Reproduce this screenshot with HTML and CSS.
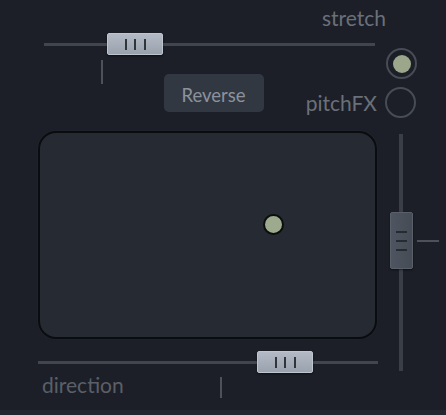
FILE: index.html
```html
<!DOCTYPE html>
<html lang="en">
<head>
  <meta charset="UTF-8" />
  <title>Stretch pad</title>
  <link rel="stylesheet" href="styles.css">
</head>
<body>
  <div class="panel">
    <div class="main">
      <div class="hslider stretch-slider">
        <div class="thumb" style="margin-left: 63px"><i></i><i></i><i></i></div>
      </div>

      <div class="mid-row">
        <span class="tick"></span>
        <button class="btn">Reverse</button>
      </div>

      <div class="pad">
        <span class="dot" style="left: 223px; top: 81px"></span>
      </div>

      <div class="hslider dir-slider">
        <div class="thumb" style="margin-left: 219px"><i></i><i></i><i></i></div>
      </div>

      <div class="dir-row">
        <span class="label">direction</span>
        <span class="tick"></span>
      </div>
    </div>

    <div class="side">
      <div class="label stretch-label">stretch</div>
      <span class="radio on"></span>
      <div class="radio-row">
        <span class="label">pitchFX</span>
        <span class="radio"></span>
      </div>

      <div class="vslider">
        <div class="vtrack">
          <div class="vthumb" style="margin-top: 78px"><i></i><i></i><i></i></div>
        </div>
        <span class="htick"></span>
      </div>
    </div>
  </div>
  <div class="footer"></div>
</body>
</html>
```

FILE: styles.css
```css
body {
  margin: 0;
  width: 446px;
  height: 415px;
  overflow: hidden;
  background-color: #1c1f27;
  font-family: Lato, "Open Sans", sans-serif;
  color: #6a707a;
}

.panel {
  display: grid;
  grid-template-columns: 380px 66px;
  height: 410px;
}

.footer {
  height: 5px;
  background-color: #24272f;
}

.main {
  display: flex;
  flex-direction: column;
  padding-left: 38px;
}

.label {
  font-size: 21px;
  line-height: 24px;
  white-space: nowrap;
}

/* horizontal sliders */
.hslider {
  height: 22px;
  display: flex;
  background: linear-gradient(to bottom, transparent 10px, #41454d 10px, #41454d 13px, transparent 13px);
}

.stretch-slider {
  margin: 33px 0 0 6px;
  width: 331px;
}

.dir-slider {
  margin-top: 12px;
  width: 340px;
}

.thumb {
  width: 54px;
  height: 20px;
  border: 1px solid #bfc5cf;
  border-radius: 2px;
  background: linear-gradient(to bottom, #b3bac6, #9aa2ae);
  display: flex;
  justify-content: center;
  align-items: center;
  gap: 7.5px;
  box-shadow: 0 1px 2px rgba(0, 0, 0, 0.5);
}

.thumb i {
  width: 2px;
  height: 11px;
  background-color: #30343b;
}

.tick {
  width: 1.5px;
  background-color: #4c515a;
}

.mid-row {
  display: flex;
  align-items: flex-start;
  margin-top: 5px;
}

.mid-row .tick {
  height: 24px;
  margin-left: 63px;
}

.btn {
  margin: 14px 0 0 61px;
  width: 100px;
  height: 38px;
  border: none;
  border-radius: 5px;
  background-color: #323842;
  color: #8b929c;
  font-family: Lato, "Open Sans", sans-serif;
  font-size: 18.5px;
  padding: 3px 0 0;
}

.pad {
  position: relative;
  margin-top: 19px;
  width: 339px;
  height: 208px;
  box-sizing: border-box;
  border: 2px solid #0a0c10;
  border-radius: 18px;
  background-color: #262a32;
  box-shadow: 0 0 2px rgba(120, 130, 145, 0.15);
}

.dot {
  position: absolute;
  width: 17px;
  height: 17px;
  border: 2px solid #0c0e0d;
  border-radius: 50%;
  background-color: #9daa8d;
}

.dir-row {
  display: grid;
  grid-template-columns: 182px auto;
  align-items: start;
}

.dir-row .label {
  margin: 0 0 0 4px;
  color: #5a5f68;
}

.dir-row .tick {
  height: 21px;
  margin-top: 4px;
}

/* right column */
.side {
  display: flex;
  flex-direction: column;
  align-items: flex-end;
}

.stretch-label {
  margin: 6px 60px 0 0;
}

.radio {
  width: 27px;
  height: 27px;
  border: 2px solid #474c55;
  border-radius: 50%;
  display: flex;
  justify-content: center;
  align-items: center;
}

.side > .radio {
  margin: 18px 29px 0 0;
}

.radio.on::after {
  content: "";
  width: 18px;
  height: 18px;
  border-radius: 50%;
  background-color: #9ba68a;
}

.radio-row {
  display: flex;
  align-items: center;
  gap: 8px;
  margin: 8px 30px 0 0;
}

.vslider {
  align-self: flex-start;
  display: flex;
  margin: 16px 0 0 10px;
}

.vtrack {
  width: 23px;
  height: 237px;
  display: flex;
  flex-direction: column;
  background: linear-gradient(to right, transparent 9px, #3a3f47 9px, #3a3f47 13px, transparent 13px);
}

.vthumb {
  height: 55px;
  border: 1px solid #5a606a;
  border-radius: 2px;
  background: linear-gradient(to right, #4f5560, #464c56);
  display: flex;
  flex-direction: column;
  justify-content: center;
  align-items: center;
  gap: 7px;
  box-shadow: 0 1px 2px rgba(0, 0, 0, 0.5);
}

.vthumb i {
  width: 11px;
  height: 2px;
  background-color: #262a31;
}

.htick {
  width: 22px;
  height: 1.5px;
  margin: 106px 0 0 4px;
  background-color: #4c515a;
}
```
